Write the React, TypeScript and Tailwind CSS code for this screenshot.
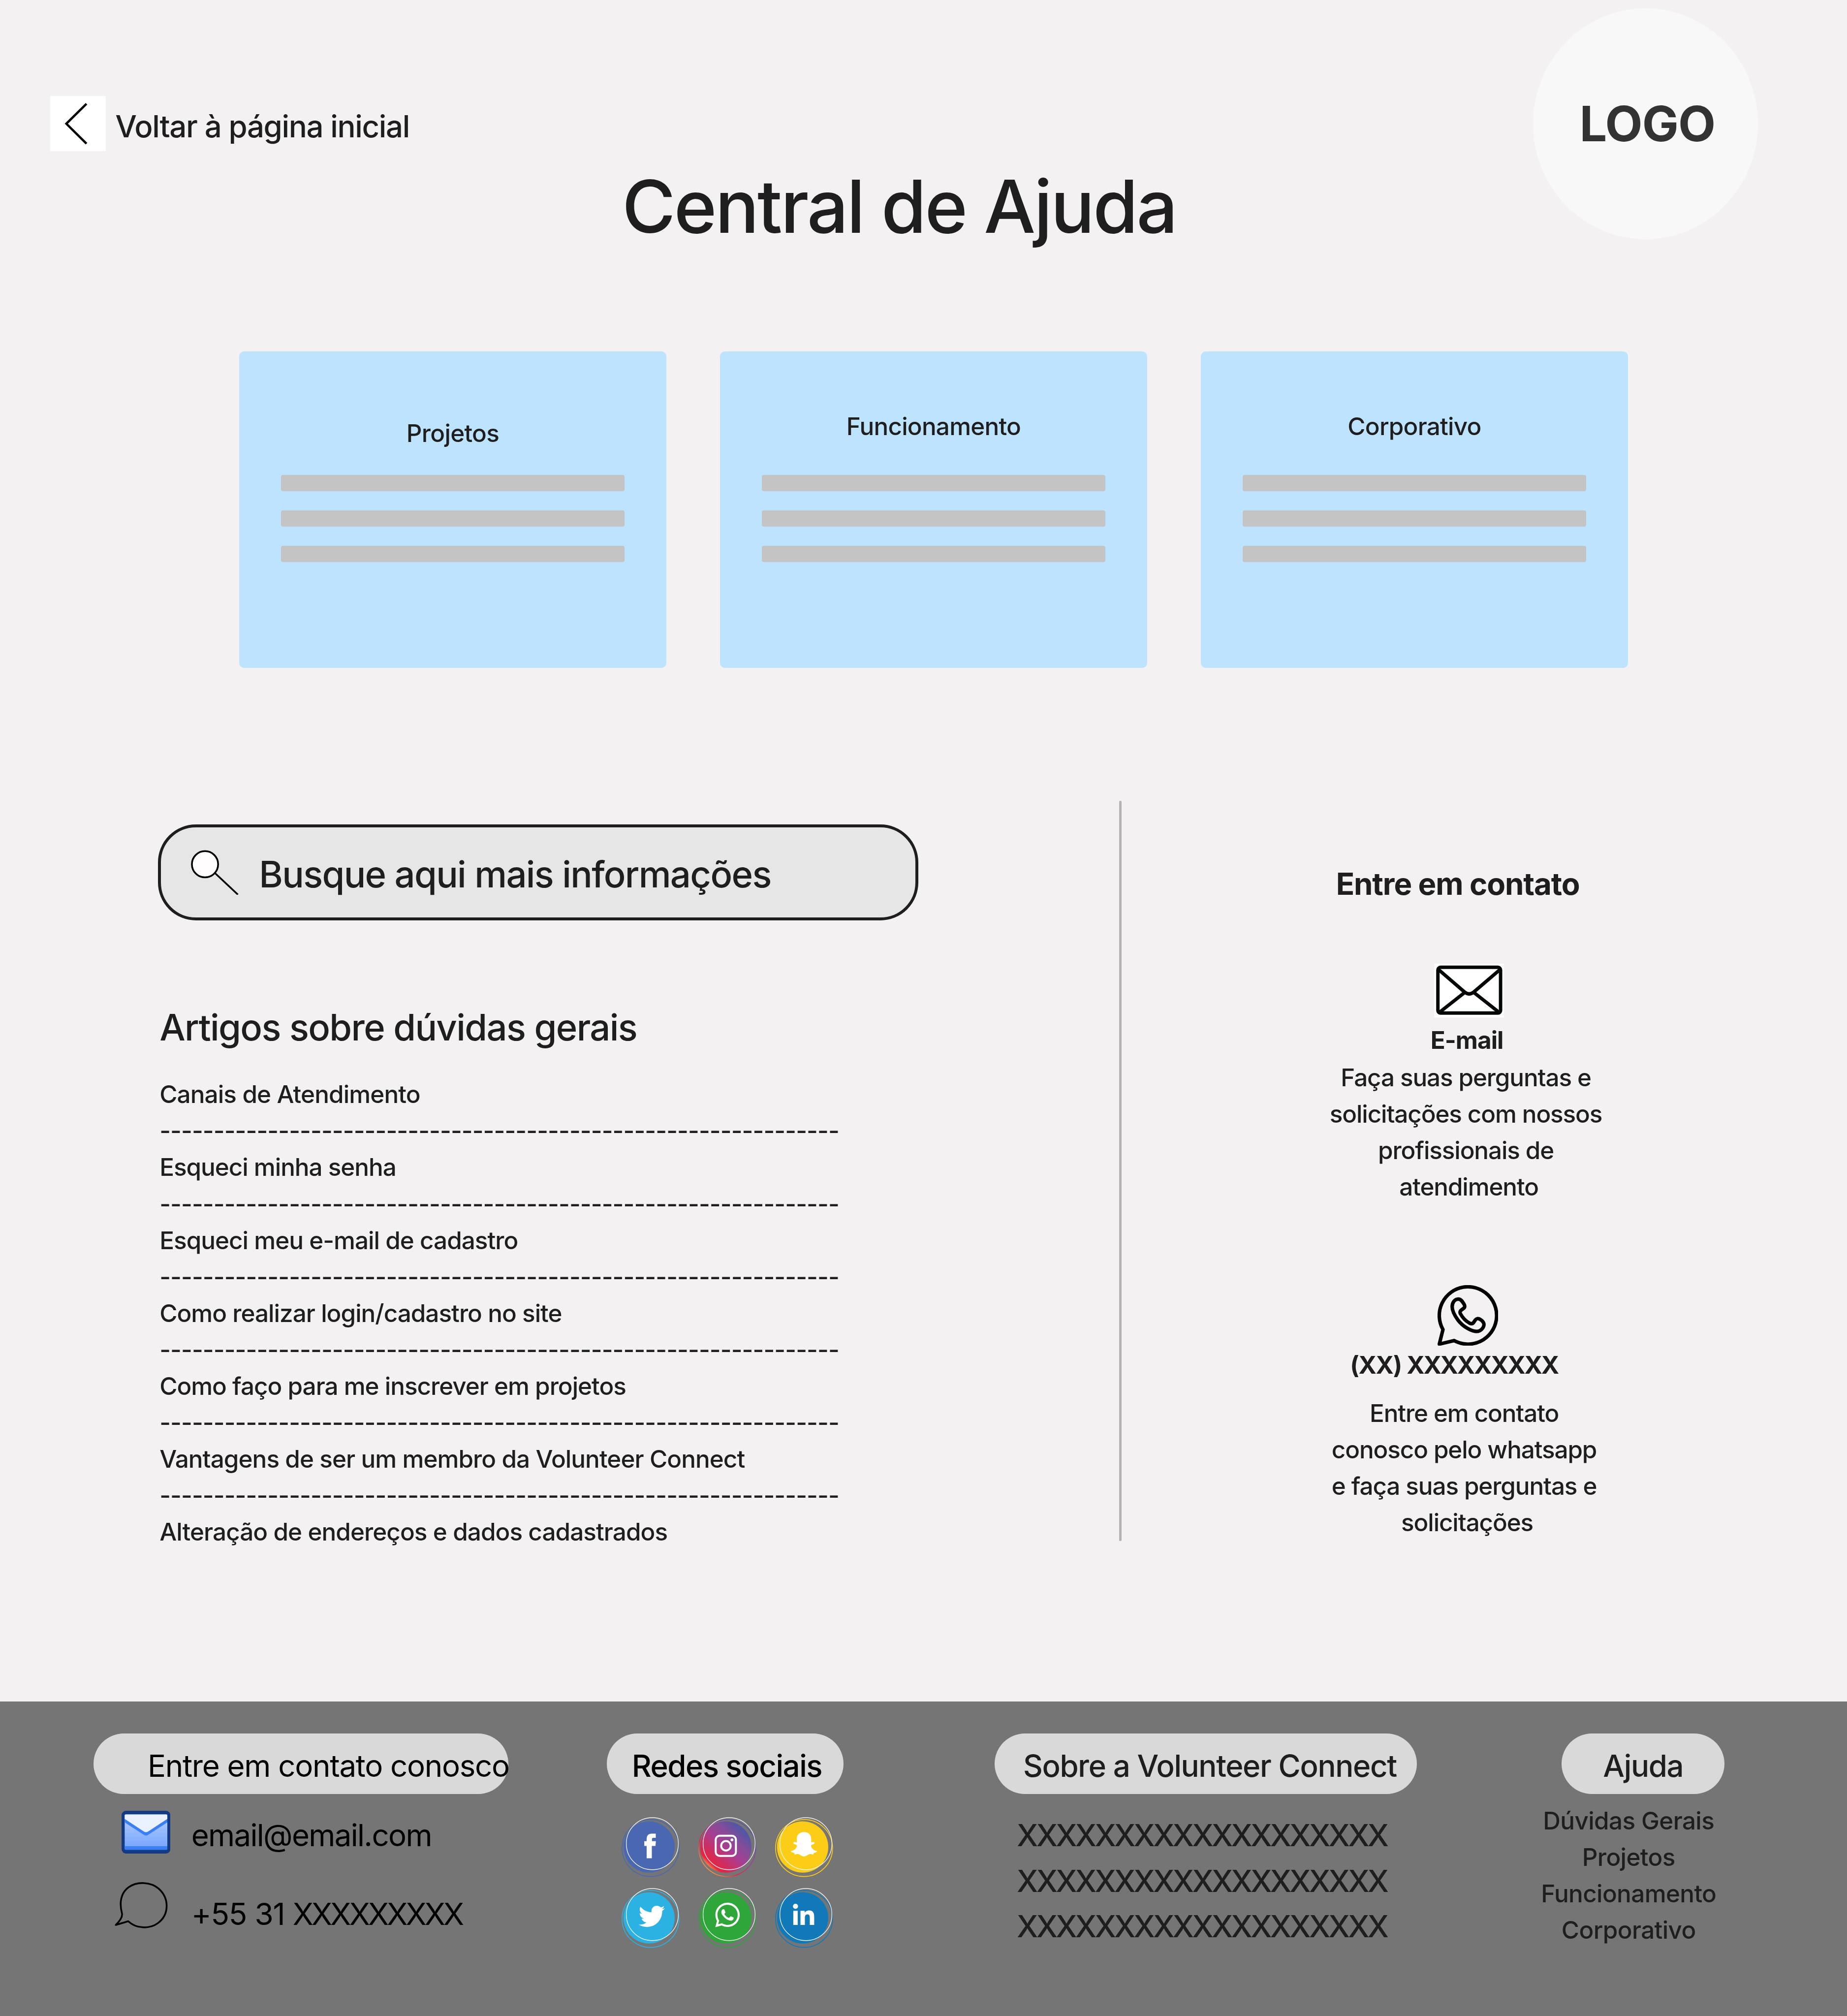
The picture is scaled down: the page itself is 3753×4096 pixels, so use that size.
import type { ReactNode } from 'react'
import { FaLinkedinIn, FaTwitter, FaWhatsapp } from 'react-icons/fa'

const DASHES = '-'.repeat(63)

const articles = [
  { text: 'Canais de Atendimento', tracking: 'tracking-[-0.0175em]' },
  { text: 'Esqueci minha senha', tracking: 'tracking-[-0.0205em]' },
  { text: 'Esqueci meu e-mail de cadastro', tracking: 'tracking-[-0.0195em]' },
  { text: 'Como realizar login/cadastro no site', tracking: 'tracking-[-0.0195em]' },
  { text: 'Como faço para me inscrever em projetos', tracking: 'tracking-[-0.0202em]' },
  { text: 'Vantagens de ser um membro da Volunteer Connect', tracking: 'tracking-[-0.0186em]' },
  { text: 'Alteração de endereços e dados cadastrados', tracking: 'tracking-[-0.0186em]' },
]

function Card({ title, offset }: { title: string; offset: string }) {
  return (
    <div className="h-[643px] w-[867.4px] rounded-[10px] bg-[#bde3ff] px-[84.4px]">
      <h2 className={`h-[250.6px] text-center text-[49.4px] leading-[74.1px] font-medium ${offset}`}>
        {title}
      </h2>
      <div className="flex flex-col gap-[38.6px]">
        <div className="h-[33.4px] rounded-[4px] bg-[#c4c4c4]" />
        <div className="h-[33.4px] rounded-[4px] bg-[#c4c4c4]" />
        <div className="h-[33.4px] rounded-[4px] bg-[#c4c4c4]" />
      </div>
    </div>
  )
}

function SearchIcon() {
  return (
    <svg className="h-[91.9px] w-[96.5px] shrink-0" viewBox="0 0 125 119" fill="none" stroke="#000" strokeWidth="4.6">
      <path d="M63 60.500 123.500 117.300" />
      <circle cx="37" cy="37.500" r="34.500" fill="#fffdfe" />
    </svg>
  )
}

function EnvelopeIcon() {
  return (
    <svg className="ml-[5px] h-[109.6px] w-[141.4px] bg-white" viewBox="0 0 183 142" fill="none" stroke="#030607" strokeWidth="9">
      <rect x="9.900" y="9.500" width="165" height="120.500" rx="7" />
      <path d="M10 14 80 74.500Q92.300 84.500 104.500 74.500L175 14M80 76 13 129M105 76l67 53" />
    </svg>
  )
}

function PhoneBubbleIcon() {
  return (
    <svg className="h-[123.5px] w-[123.5px]" viewBox="0 0 160 160" fill="none" stroke="#000" strokeWidth="9.300" strokeLinejoin="round">
      <path d="M14.300 117A75.500 75.500 0 1 1 43.500 146L4.700 155.300Z" />
      <path d="M54.800 36.700C61 36.700 65 42 70.500 51.500C72 55 72 58 70 60L62 66.300C58.500 69 58.500 71 60 75C66 86 74 94.500 84 100C88 102 92 102 94.500 99L99.700 91.500C102 88 107 87.500 110 89C115 91.500 119 95 121 99C123 103 122 108 120 111.500C116 118 110 122 102.500 122C90 121.500 68 111 53.700 92C46 81.500 38.500 68 38.500 57C38.500 46 45 36.900 54.800 36.700Z" />
    </svg>
  )
}

function MailColorIcon() {
  return (
    <svg className="h-[86.9px] w-[99.3px] shrink-0" viewBox="0 0 129 113">
      <defs>
        <linearGradient id="mailBody" x1="0" y1="0" x2="0" y2="1">
          <stop offset="0" stopColor="#b5d0ff" />
          <stop offset="1" stopColor="#73a2ff" />
        </linearGradient>
        <clipPath id="mailClip">
          <rect x="8" y="9.700" width="113" height="93.500" rx="3" />
        </clipPath>
      </defs>
      <rect width="129" height="113" rx="12" fill="#133a82" />
      <g clipPath="url(#mailClip)">
        <rect x="8" y="9" width="113" height="95" fill="url(#mailBody)" />
        <rect x="8" y="93.700" width="113" height="10" fill="#3b7ff7" />
        <path d="M8 9V30.500L58.500 63.500Q64.500 67.500 70.500 63.500L121 30.500V9Z" fill="#3b7ff7" />
        <path d="M8 9V21.500L59 54.800Q64.500 58.500 70 54.800L121 21.500V9Z" fill="#e9f0ff" />
      </g>
    </svg>
  )
}

function ChatIcon() {
  return (
    <svg className="h-[95.7px] w-[110.4px] shrink-0" viewBox="0 0 143 124" fill="none" stroke="#000" strokeWidth="4.600" strokeLinejoin="round">
      <path d="M20.800 83.500C13 55 17 29 38 13.500C60-2.500 96-1 117 17C146 43 145 86 115 108C93 124 58 123 37 103L4.200 112.800C13 104 22 93 20.800 83.500Z" />
    </svg>
  )
}

function Social({ color, ring, children }: { color: string; ring?: string; children: ReactNode }) {
  return (
    <svg className="h-[122px] w-[118.1px] overflow-visible" viewBox="0 0 153 158">
      <circle cx="76.200" cy="81.200" r="75" fill="none" stroke={ring ?? color} strokeWidth="2.200" />
      <circle cx="72.400" cy="78.600" r="67.500" fill={color} />
      <circle cx="81" cy="69.800" r="68.500" fill="none" stroke="#f6f6f6" strokeWidth="1.700" />
      {children}
    </svg>
  )
}

function SocialGrid() {
  return (
    <div className="mt-[46.5px] ml-[30.7px] grid grid-cols-[118.1px_118.1px_118.1px] gap-x-[37.6px] gap-y-[22.4px]">
      <Social color="#4a68b1">
        <path fill="#fff" d="M66 108.300V75.700H59.800V63H66V58C66 48 71 43.300 79 43.300H90V54.300H83.500C81 54.300 80 55.500 80 58V63H90.300L89.300 75.700H79.600V108.300Z" />
      </Social>
      <Social color="url(#instaFill)" ring="url(#instaRing)">
        <defs>
          <linearGradient id="instaFill" gradientUnits="userSpaceOnUse" x1="25" y1="128" x2="118" y2="28">
            <stop offset="0" stopColor="#f58a4c" />
            <stop offset="0.080" stopColor="#e8233f" />
            <stop offset="0.500" stopColor="#a53f92" />
            <stop offset="0.700" stopColor="#884b98" />
            <stop offset="0.950" stopColor="#5556a5" />
          </linearGradient>
          <linearGradient id="instaRing" gradientUnits="userSpaceOnUse" x1="25" y1="135" x2="128" y2="26">
            <stop offset="0" stopColor="#f5924e" />
            <stop offset="0.250" stopColor="#e8233f" />
            <stop offset="0.550" stopColor="#a53f92" />
            <stop offset="0.950" stopColor="#5556a5" />
          </linearGradient>
        </defs>
        <g fill="none" stroke="#fff" strokeWidth="5.100">
          <rect x="45.700" y="48.800" width="53.200" height="53.200" rx="10.500" />
          <circle cx="72.600" cy="75.300" r="12.500" />
        </g>
        <circle cx="88.500" cy="59.700" r="3.800" fill="#fff" />
      </Social>
      <Social color="#fccd17">
        <path fill="#fff" d="M76 39.300C64 39.300 57 47 57 57V66.500C53 66 49.500 63 48.200 67.500C48 71 52 71.500 55 72.200C59.500 74 56.500 79.500 54 82.500C50 87.500 46 88 42 89C40.500 91.500 45 93 50 94C51 96 51 98 52 98.300C55 98 58 96.500 62 97.500C67 99 70 103.300 76 103.300C82 103.300 85 99 90 97.500C94 96.500 97 98 100 98.300C101 98 101 96 102 94C107 93 111.500 91.500 110 89C106 88 102 87.500 98 82.500C95.500 79.500 92.500 74 97 72.200C100 71.500 104 71 103.800 67.500C102.500 63 99 66 95 66.500V57C95 47 88 39.300 76 39.300Z" />
      </Social>
      <Social color="#2bb1e2">
        <FaTwitter x="45" y="40" size={69} color="#fff" />
      </Social>
      <Social color="#2ea639">
        <FaWhatsapp x="40" y="34" size={73.500} color="#fff" />
      </Social>
      <Social color="#1279b8">
        <FaLinkedinIn x="42.900" y="41.300" size={64} color="#fff" />
      </Social>
    </div>
  )
}

export default function App() {
  return (
    <div className="flex h-[4096px] w-full flex-col overflow-hidden bg-[#f3f1f2] font-['Inter',sans-serif] font-medium whitespace-pre text-[#1e1e1e]">
      <header className="flex h-[714.3px] shrink-0 items-start">
        <a className="mt-[194.5px] flex w-[1264px] shrink-0 items-center pl-[101.9px]">
          <span className="flex size-[112.7px] items-center justify-center bg-white">
            <svg className="size-[112.7px]" viewBox="0 0 146 146" fill="none" stroke="#000" strokeWidth="6">
              <path d="M95.500 20.500 42.500 73 95.500 125.500" />
            </svg>
          </span>
          <span className="mt-[13px] ml-[19.7px] text-[61.75px] leading-[92.6px] tracking-[-0.022em]">
            Voltar à página inicial
          </span>
        </a>
        <h1 className="mt-[344.5px] text-[148.2px] leading-[148px] tracking-[-0.022em]">Central de Ajuda</h1>
        <div className="mt-[17px] mr-[180.7px] ml-auto flex h-[469.3px] w-[457px] items-center justify-center rounded-[50%] bg-[#f8f8f8] pl-[7px] text-[98.8px] leading-none font-bold tracking-[-0.01em] text-[#333]">
          LOGO
        </div>
      </header>

      <section className="flex shrink-0 gap-[109.6px] pl-[486.3px]">
        <Card title="Projetos" offset="pt-[129.2px] tracking-[-0.014em]" />
        <Card title="Funcionamento" offset="pt-[114.7px] tracking-[-0.0155em]" />
        <Card title="Corporativo" offset="pt-[114.7px] tracking-[-0.0155em]" />
      </section>

      <main className="mt-[269.4px] flex h-[1830px] shrink-0 items-start">
        <div className="w-[2274.3px] shrink-0 pl-[321px]">
          <div className="mt-[48.6px] flex h-[194.5px] w-[1545.4px] items-center rounded-[77px] border-[6px] border-[#1e1e1e] bg-[#e6e6e6] pl-[61px]">
            <SearchIcon />
            <span className="ml-[41.8px] pt-[9px] text-[74.1px] leading-[111.2px] tracking-[-0.0222em]">
              Busque aqui mais informações
            </span>
          </div>
          <h2 className="mt-[162.6px] ml-[3.2px] text-[74.1px] leading-[111.2px] tracking-[-0.0218em]">
            Artigos sobre dúvidas gerais
          </h2>
          <ul className="mt-[42.7px] ml-[3.2px] text-[49.4px] leading-[74.1px]">
            {articles.map((a, i) => (
              <li key={a.text}>
                {i > 0 && <p className="tracking-[-0.0187em]">{DASHES}</p>}
                <p className={a.tracking}>{a.text}</p>
              </li>
            ))}
          </ul>
        </div>

        <div className="h-[1504px] w-[5px] shrink-0 rounded-full bg-[#b3b3b3]" />

        <div className="flex w-[1406.6px] flex-col items-center text-[49.4px] leading-[74.1px] tracking-[-0.0225em]">
          <h2 className="mt-[123.5px] mr-[41px] text-[61.75px] leading-[92.6px] font-bold tracking-[-0.018em]">
            Entre em contato
          </h2>
          <div className="mt-[115.1px] flex flex-col items-center">
            <EnvelopeIcon />
            <h3 className="mt-[9px] mr-[4px] font-bold tracking-[-0.02em]">E-mail</h3>
            <p className="mt-[1.4px] ml-[4px] text-center">
              {'Faça suas perguntas e \nsolicitações com nossos \nprofissionais de \natendimento'}
            </p>
          </div>
          <div className="mt-[162.5px] flex flex-col items-center">
            <PhoneBubbleIcon />
            <h3 className="mt-[1.3px] mr-[56px] font-bold">
              <span className="tracking-[-0.028em]">(XX) </span>
              <span className="tracking-[-0.046em]">XXXXXXXXX</span>
            </h3>
            <p className="mt-[24.3px] mr-[3px] text-center">
              {'Entre em contato \nconosco pelo whatsapp \ne faça suas perguntas e \nsolicitações'}
            </p>
          </div>
        </div>
      </main>

      <footer className="flex grow items-start bg-[#757575] pt-[65px] pl-[189.9px] text-[61.75px] leading-[92.6px]">
        <div className="w-[842.9px] font-normal text-black">
          <h2 className="flex h-[123.8px] items-center rounded-full bg-[#d9d9d9] pt-[8.5px] pl-[110px] tracking-[-0.0207em]">
            Entre em contato conosco
          </h2>
          <div className="mt-[33.7px] flex h-[95.4px] items-start gap-[42.4px] pl-[57.1px]">
            <MailColorIcon />
            <span className="mt-[3.8px] tracking-[-0.027em]">email@email.com</span>
          </div>
          <div className="mt-[49.7px] flex items-start gap-[46.7px] pl-[41.7px]">
            <ChatIcon />
            <p className="mt-[18.4px]">
              <span className="tracking-[-0.018em]">+55 31 </span>
              <span className="tracking-[-0.0623em]">XXXXXXXXX</span>
            </p>
          </div>
        </div>

        <div className="ml-[199.9px] w-[481px]">
          <h2 className="flex h-[123.8px] items-center rounded-full bg-[#d9d9d9] pt-[8.5px] pl-[51px] tracking-[-0.0235em] text-black">
            Redes sociais
          </h2>
          <SocialGrid />
        </div>

        <div className="ml-[307.1px] w-[858.7px]">
          <h2 className="flex h-[123.8px] items-center rounded-full bg-[#d9d9d9] pt-[8.5px] pl-[58.3px] tracking-[-0.0222em]">
            Sobre a Volunteer Connect
          </h2>
          <p className="mt-[37.5px] ml-[45.3px] tracking-[-0.0595em]">
            {'XXXXXXXXXXXXXXXXXXX\nXXXXXXXXXXXXXXXXXXX\nXXXXXXXXXXXXXXXXXXX'}
          </p>
        </div>

        <div className="ml-[229.8px] w-[400px]">
          <h2 className="ml-[64px] flex h-[123.8px] w-[331.1px] items-center justify-center rounded-full bg-[#d9d9d9] pt-[8.5px] tracking-[-0.022em]">
            Ajuda
          </h2>
          <p className="mt-[16.2px] text-center text-[49.4px] leading-[74.1px] tracking-[-0.0125em]">
            {'Dúvidas Gerais\nProjetos\nFuncionamento\nCorporativo'}
          </p>
        </div>
      </footer>
    </div>
  )
}
